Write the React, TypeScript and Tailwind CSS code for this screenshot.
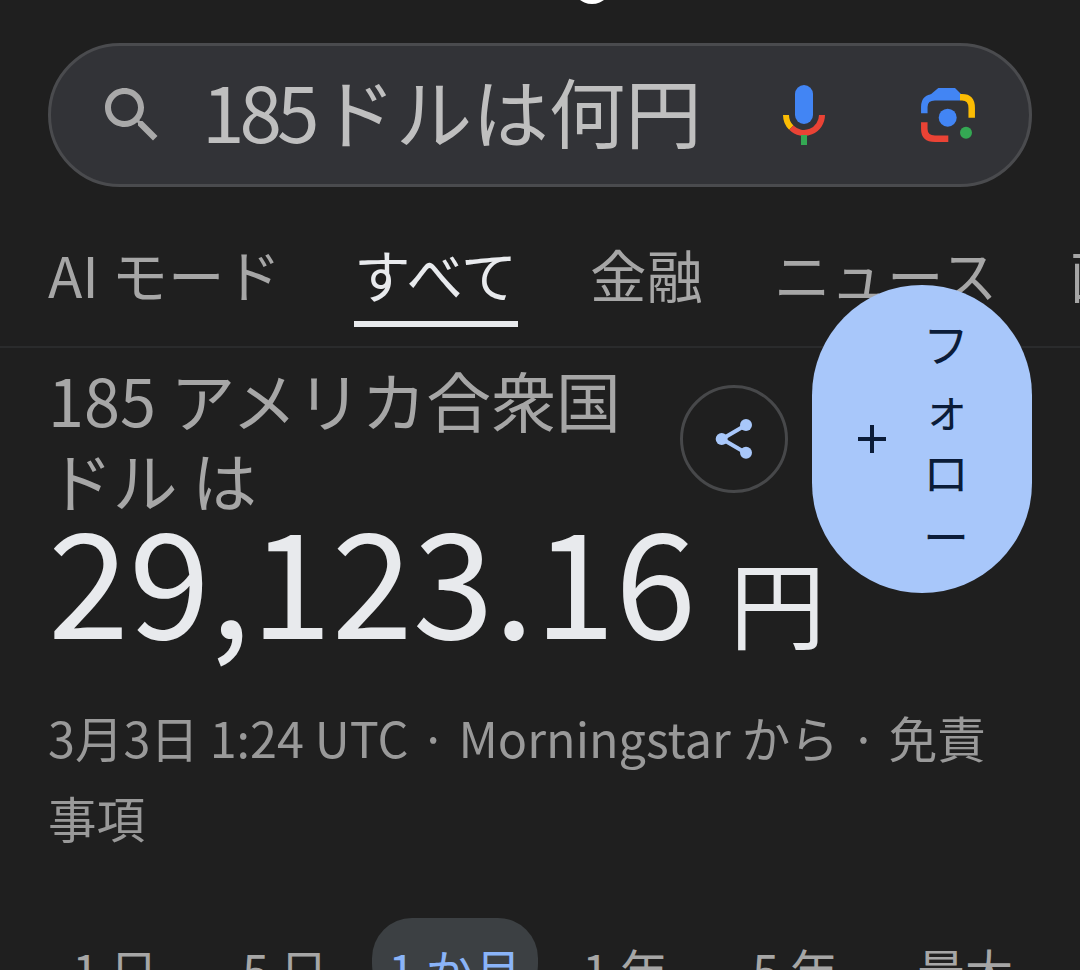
const font = { fontFamily: "'Noto Sans CJK JP', 'Noto Sans', sans-serif" };

const tabs = [
  { label: "AI モード", className: "w-[228px] text-[#a6a6a6]" },
  { label: "すべて", className: "ml-[78px] w-[164px] border-b-[6px] border-[#e8eaed] text-[#e8eaed]" },
  { label: "金融", className: "ml-[72px] w-[112px] text-[#a6a6a6]" },
  { label: "ニュース", className: "ml-[72px] w-[224px] text-[#a6a6a6]" },
  { label: "画像", className: "ml-[72px] w-[112px] text-[#a6a6a6]" },
];
const ranges = ["1 日", "5 日", "1 か月", "1 年", "5 年", "最大"];

function SearchIcon() {
  return (
    <svg width="72" height="72" viewBox="0 0 24 24" fill="#a9a9a9">
      <path d="M15.5 14h-.79l-.28-.27C15.41 12.59 16 11.11 16 9.5 16 5.91 13.09 3 9.5 3S3 5.91 3 9.5 5.91 16 9.5 16c1.61 0 3.09-.59 4.23-1.57l.27.28v.79l5 4.99L20.49 19l-4.99-5zm-6 0C7.01 14 5 11.99 5 9.5S7.01 5 9.5 5 14 7.01 14 9.5 11.99 14 9.5 14z" />
    </svg>
  );
}

function MicIcon() {
  return (
    <svg width="42" height="60" viewBox="0 0 42 60" fill="none">
      <rect x="12" y="0" width="18" height="39" rx="9" fill="#4285f4" />
      <path d="M3 30 A18 18 0 0 0 8.3 42.7" stroke="#fbbc04" strokeWidth="6" />
      <path d="M8.3 42.7 A18 18 0 0 0 39 30" stroke="#ea4335" strokeWidth="6" />
      <rect x="18" y="50" width="6" height="10" fill="#34a853" />
    </svg>
  );
}

function LensIcon() {
  return (
    <svg width="54" height="54" viewBox="0 0 54 54" fill="none">
      <path d="M17.3 0 H34 L41 7 V9 H9 V7 Z" fill="#4285f4" />
      <path d="M3.3 25.3 V19 C3.3 12.5 7 9.3 14 9.3 H39" stroke="#4285f4" strokeWidth="6.5" />
      <path d="M39 9.3 H41 C47.5 9.3 50.7 13 50.7 20 V29.7" stroke="#fbbc04" strokeWidth="6.5" />
      <path d="M3.3 34.3 V41 C3.3 47.5 7 50.7 14 50.7 H27.3" stroke="#ea4335" strokeWidth="6.5" />
      <circle cx="26.7" cy="29.7" r="9" fill="#4285f4" />
      <circle cx="45" cy="44.7" r="6" fill="#34a853" />
    </svg>
  );
}

function ShareIcon() {
  return (
    <svg width="40" height="42" viewBox="0 0 40 42" fill="#a8c7fa">
      <path d="M32 7 L8 21 L32 35" fill="none" stroke="#a8c7fa" strokeWidth="4" />
      <circle cx="32" cy="7" r="6" />
      <circle cx="7.7" cy="21" r="6" />
      <circle cx="32" cy="34.7" r="6" />
    </svg>
  );
}

export default function App() {
  return (
    <div className="relative h-[970px] w-[1080px] overflow-hidden bg-[#1f1f1f]" style={font}>
      {/* top indicator dot */}
      <div className="absolute left-[572px] top-[-36px] h-[40px] w-[40px] rounded-full bg-white" />

      {/* Search bar */}
      <div className="px-[48px] pt-[43px]">
        <div className="flex h-[144px] items-center rounded-[72px] border-[3px] border-[#4a4b4e] bg-[#323337] pl-[45px] pr-[54px]">
          <SearchIcon />
          <span className="ml-[34px] pb-[10px] text-[76.5px] leading-none text-[#bfbfbf]">
            <span className="tracking-[-5px]">185</span>
            <span className="ml-[5px]">ドルは何円</span>
          </span>
          <div className="ml-auto flex items-center gap-[96px]">
            <MicIcon />
            <LensIcon />
          </div>
        </div>
      </div>

      {/* Tabs */}
      <div className="mt-[34px] h-[127px] overflow-hidden border-b-2 border-[#2a2b2c]">
        <div className="flex w-[1300px] pl-[48px]">
          {tabs.map((t) => (
            <div key={t.label} className={`h-[106px] shrink-0 whitespace-nowrap pt-[14px] text-[56.5px] leading-[76px] ${t.className}`}>
              {t.label}
            </div>
          ))}
        </div>
      </div>

      {/* Result */}
      <div className="px-[48px]">
        <div className="flex">
          <div className="w-[600px] pt-[11px] text-[64.8px] leading-[80px] text-[#a6a6a6]">185 アメリカ合衆国 ドル は</div>
          <div className="ml-[32px] mt-[37px] flex h-[108px] w-[108px] items-center justify-center rounded-full border-[3px] border-[#47484a]">
            <ShareIcon />
          </div>
        </div>
        <div className="mt-[-18px] flex items-baseline gap-[33px] text-[#e8eaed]">
          <span className="text-[146px] leading-[150px]">29,123.16</span>
          <span className="translate-y-[3px] text-[96px] leading-[150px]">円</span>
        </div>
        <p className="mt-[24px] w-[960px] text-[48.5px] leading-[80px] text-[#999999]">
          3月3日 1:24 UTC
          <span className="inline-block w-[50px] text-center">·</span>
          Morningstar から
          <span className="inline-block w-[50px] text-center">·</span>
          免責事項
        </p>
      </div>

      {/* Range tabs */}
      <div className="mt-[61px] grid grid-cols-6 px-[30px]">
        {ranges.map((r) => (
          <div
            key={r}
            className={
              r === "1 か月"
                ? "mx-auto w-[166px] rounded-[40px] bg-[#3c4043] pt-[16px] text-center text-[48px] leading-[70px] text-[#8ab4f8]"
                : "pt-[16px] text-center text-[48px] leading-[70px] text-[#a6a6a6]"
            }
          >
            {r}
          </div>
        ))}
      </div>

      {/* Follow button */}
      <div className="absolute left-[812px] top-[285px] flex h-[308px] w-[220px] items-center rounded-[110px] bg-[#a8c7fa] pl-[44px] text-[#0b1c38]">
        <svg width="32" height="32" viewBox="0 0 32 32" fill="none" stroke="#0b1c38" strokeWidth="4">
          <path d="M16 2 V30 M2 16 H30" />
        </svg>
        <span className="ml-[34px] w-[48px] break-all pb-[2px] text-center text-[46px] leading-[64px]">フォロー</span>
      </div>
    </div>
  );
}
